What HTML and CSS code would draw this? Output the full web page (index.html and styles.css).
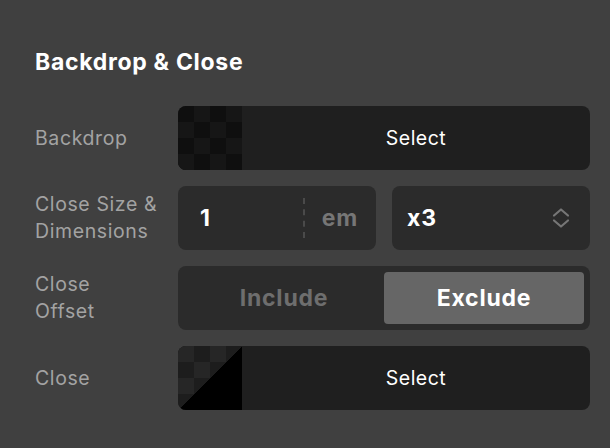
FILE: index.html
```html
<!DOCTYPE html>
<html lang="en">
<head>
    <meta charset="UTF-8">
    <meta name="viewport" content="width=device-width, initial-scale=1.0">
    <title>Backdrop &amp; Close</title>
    <link rel="stylesheet" href="styles.css">
</head>
<body>
    <div class="panel">
        <h2 class="panel-title">Backdrop &amp; Close</h2>

        <div class="row">
            <div class="label">Backdrop</div>
            <div class="picker">
                <div class="swatch swatch-dark"></div>
                <div class="picker-text">Select</div>
            </div>
        </div>

        <div class="row">
            <div class="label">Close Size &amp;<br>Dimensions</div>
            <div class="pair">
                <div class="field">
                    <span class="field-value">1</span>
                    <span class="field-sep"></span>
                    <span class="field-unit">em</span>
                </div>
                <div class="field dropdown">
                    <span class="field-value">x3</span>
                    <svg class="chevrons" width="18" height="22" viewBox="0 0 18 22" fill="none" stroke="#767676" stroke-width="2.2" stroke-linecap="round" stroke-linejoin="round">
                        <path d="M2 8.5 L9 2.5 L16 8.5"/>
                        <path d="M2 13.5 L9 19.5 L16 13.5"/>
                    </svg>
                </div>
            </div>
        </div>

        <div class="row">
            <div class="label">Close<br>Offset</div>
            <div class="segmented">
                <div class="segment">Include</div>
                <div class="segment active">Exclude</div>
            </div>
        </div>

        <div class="row">
            <div class="label">Close</div>
            <div class="picker">
                <div class="swatch swatch-close"></div>
                <div class="picker-text">Select</div>
            </div>
        </div>
    </div>
</body>
</html>
```

FILE: styles.css
```css
body {
    margin: 0;
    background-color: #404040;
    font-family: Inter, "Open Sans", sans-serif;
    color: #fff;
}
.panel {
    padding: 48px 20px 0 35px;
}
.panel-title {
    margin: 0 0 30px 0;
    font-size: 23px;
    line-height: 28px;
    font-weight: 700;
    letter-spacing: 0.7px;
}
.row {
    display: grid;
    grid-template-columns: 143px 1fr;
    align-items: center;
    height: 64px;
    margin-bottom: 16px;
}
.label {
    color: #a3a3a3;
    font-size: 19.5px;
    line-height: 27px;
    letter-spacing: 0.6px;
}

/* image / colour picker */
.picker {
    display: flex;
    height: 64px;
    background-color: #1f1f1f;
    border-radius: 8px;
    overflow: hidden;
}
.swatch {
    width: 64px;
    flex: none;
}
.swatch-dark {
    background-color: #0f0f0f;
    background-image:
        linear-gradient(45deg, #161616 25%, transparent 25%, transparent 75%, #161616 75%),
        linear-gradient(45deg, #161616 25%, transparent 25%, transparent 75%, #161616 75%);
    background-size: 32px 32px;
    background-position: 0 0, 16px 16px;
}
.swatch-close {
    background-image:
        linear-gradient(to top left, #000 50%, transparent 50%),
        linear-gradient(45deg, #262626 25%, transparent 25%, transparent 75%, #262626 75%),
        linear-gradient(45deg, #262626 25%, transparent 25%, transparent 75%, #262626 75%);
    background-color: #1d1d1d;
    background-size: 100% 100%, 32px 32px, 32px 32px;
    background-position: 0 0, 16px 0, 0 16px;
}
.picker-text {
    flex: 1;
    display: flex;
    align-items: center;
    justify-content: center;
    font-size: 19.5px;
    letter-spacing: 0.5px;
}

/* number + select */
.pair {
    display: grid;
    grid-template-columns: 1fr 1fr;
    gap: 16px;
}
.field {
    display: flex;
    align-items: center;
    height: 64px;
    background-color: #2b2b2b;
    border-radius: 8px;
    padding: 0 18px 0 22px;
}
.field-value {
    flex: 1;
    font-size: 23px;
    font-weight: 700;
    letter-spacing: 0.8px;
}
.field-sep {
    width: 0;
    height: 40px;
    border-left: 2px dashed #4a4a4a;
    margin-right: 17px;
}
.field-unit {
    color: #767676;
    font-size: 23px;
    font-weight: 700;
    letter-spacing: 0.8px;
}
.dropdown {
    padding: 0 20px 0 15px;
}

/* include / exclude toggle */
.segmented {
    display: grid;
    grid-template-columns: 1fr 1fr;
    height: 64px;
    padding: 6px;
    box-sizing: border-box;
    background-color: #2b2b2b;
    border-radius: 8px;
}
.segment {
    display: flex;
    align-items: center;
    justify-content: center;
    border-radius: 4px;
    color: #6e6e6e;
    font-size: 23px;
    font-weight: 700;
    letter-spacing: 0.8px;
}
.segment.active {
    background-color: #666;
    color: #fff;
}
```
